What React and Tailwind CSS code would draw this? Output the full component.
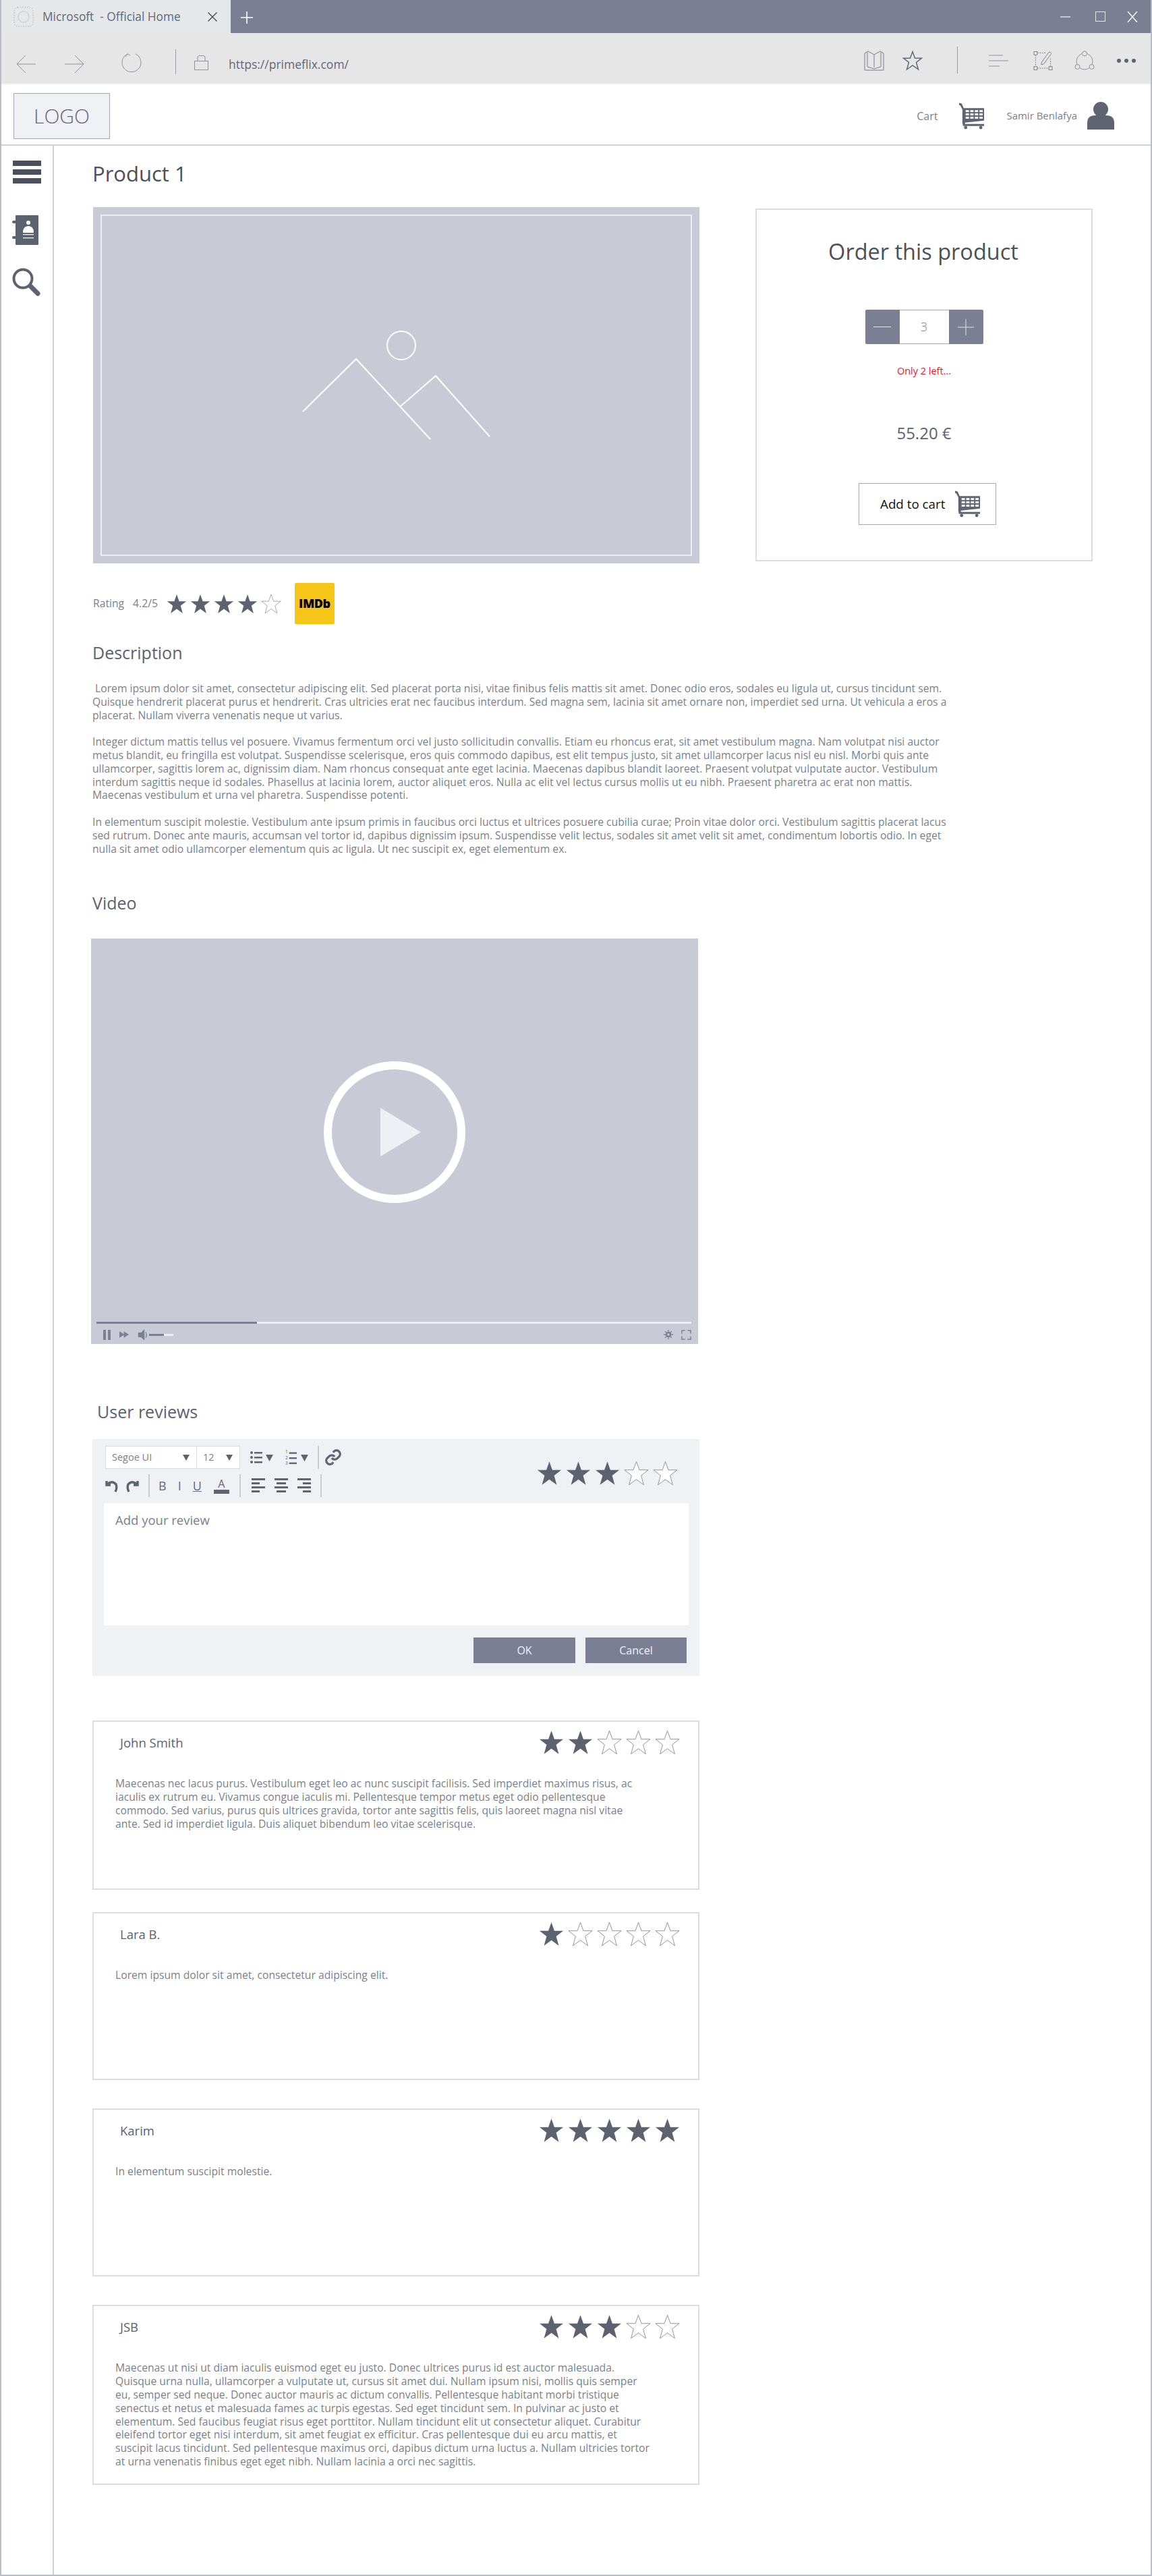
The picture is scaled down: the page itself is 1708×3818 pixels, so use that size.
import React from 'react';

const Star = ({ filled, size = 37 }) => (
  <svg width={size} height={size} viewBox="0 0 24 24" className="shrink-0">
    <polygon
      points="12,0.8 14.9,8.9 23.4,8.9 16.6,14.2 19.1,23.2 12,18 4.9,23.2 7.4,14.2 0.6,8.9 9.1,8.9"
      fill={filled ? '#5c6270' : '#ffffff'}
      stroke={filled ? '#5c6270' : '#8a8d98'}
      strokeWidth={filled ? 0 : 0.6}
    />
  </svg>
);

const Stars = ({ count, size = 37, className = 'gap-[6px]' }) => (
  <div className={`flex ${className}`}>
    {[1, 2, 3, 4, 5].map((n) => (
      <Star key={n} filled={n <= count} size={size} />
    ))}
  </div>
);

const CartIcon = ({ className }) => (
  <svg viewBox="0 0 40 40" className={className} fill="#5f6472">
    <path d="M1 0 L5 1 L8 8 L39 8 L39 27 L10 30 L10 32 L39 32 L39 35 L7 35 L6 30 L6 10 L3 4 L1 3 Z" />
    <circle cx="11" cy="37.5" r="2.5" />
    <circle cx="34" cy="37.5" r="2.5" />
    <g fill="#ffffff">
      <rect x="11" y="11" width="5" height="3" />
      <rect x="18" y="11" width="5" height="3" />
      <rect x="25" y="11" width="5" height="3" />
      <rect x="32" y="11" width="5" height="3" />
      <rect x="11" y="16" width="5" height="3" />
      <rect x="18" y="16" width="5" height="3" />
      <rect x="25" y="16" width="5" height="3" />
      <rect x="32" y="16" width="5" height="3" />
      <rect x="11" y="21" width="5" height="3" />
      <rect x="18" y="21" width="5" height="3" />
      <rect x="25" y="21" width="5" height="3" />
      <rect x="32" y="21" width="5" height="3" />
    </g>
  </svg>
);

const Caret = ({ className }) => (
  <svg viewBox="0 0 10 10" className={className} fill="#5f6472">
    <polygon points="0,1 10,1 5,10" />
  </svg>
);

const Sep = ({ className }) => <div className={`w-[2px] bg-[#c9ccd4] ${className}`} />;

const AlignIcon = ({ kind }) => {
  const short = kind === 'left' ? [0, 12] : kind === 'center' ? [3, 14] : [8, 12];
  return (
    <svg viewBox="0 0 20 24" className="w-[20px] h-[24px]" fill="#5f6472">
      <rect x="0" y="1" width="20" height="3" />
      <rect x={short[0]} y="7" width={short[1]} height="3" />
      <rect x="0" y="13" width="20" height="3" />
      <rect x={short[0]} y="19" width={short[1]} height="3" />
    </svg>
  );
};

const reviews = [
  {
    name: 'John Smith',
    stars: 2,
    height: 'h-[251px]',
    mt: 'mt-[66px]',
    lines: [
      'Maecenas nec lacus purus. Vestibulum eget leo ac nunc suscipit facilisis. Sed imperdiet maximus risus, ac',
      'iaculis ex rutrum eu. Vivamus congue iaculis mi. Pellentesque tempor metus eget odio pellentesque',
      'commodo. Sed varius, purus quis ultrices gravida, tortor ante sagittis felis, quis laoreet magna nisl vitae',
      'ante. Sed id imperdiet ligula. Duis aliquet bibendum leo vitae scelerisque.',
    ],
  },
  {
    name: 'Lara B.',
    stars: 1,
    height: 'h-[249px]',
    mt: 'mt-[33px]',
    lines: ['Lorem ipsum dolor sit amet, consectetur adipiscing elit.'],
  },
  {
    name: 'Karim',
    stars: 5,
    height: 'h-[249px]',
    mt: 'mt-[42px]',
    lines: ['In elementum suscipit molestie.'],
  },
  {
    name: 'JSB',
    stars: 3,
    height: 'h-[267px]',
    mt: 'mt-[42px]',
    lines: [
      'Maecenas ut nisi ut diam iaculis euismod eget eu justo. Donec ultrices purus id est auctor malesuada.',
      'Quisque urna nulla, ullamcorper a vulputate ut, cursus sit amet dui. Nullam ipsum nisi, mollis quis semper',
      'eu, semper sed neque. Donec auctor mauris ac dictum convallis. Pellentesque habitant morbi tristique',
      'senectus et netus et malesuada fames ac turpis egestas. Sed eget tincidunt sem. In pulvinar ac justo et',
      'elementum. Sed faucibus feugiat risus eget porttitor. Nullam tincidunt elit ut consectetur aliquet. Curabitur',
      'eleifend tortor eget nisi interdum, sit amet feugiat ex efficitur. Cras pellentesque dui eu arcu mattis, et',
      'suscipit lacus tincidunt. Sed pellentesque maximus orci, dapibus dictum urna luctus a. Nullam ultricies tortor',
      'at urna venenatis finibus eget eget nibh. Nullam lacinia a orci nec sagittis.',
    ],
  },
];

const description = [
  [
    '\u00a0Lorem ipsum dolor sit amet, consectetur adipiscing elit. Sed placerat porta nisi, vitae finibus felis mattis sit amet. Donec odio eros, sodales eu ligula ut, cursus tincidunt sem.',
    'Quisque hendrerit placerat purus et hendrerit. Cras ultricies erat nec faucibus interdum. Sed magna sem, lacinia sit amet ornare non, imperdiet sed urna. Ut vehicula a eros a',
    'placerat. Nullam viverra venenatis neque ut varius.',
  ],
  [
    'Integer dictum mattis tellus vel posuere. Vivamus fermentum orci vel justo sollicitudin convallis. Etiam eu rhoncus erat, sit amet vestibulum magna. Nam volutpat nisi auctor',
    'metus blandit, eu fringilla est volutpat. Suspendisse scelerisque, eros quis commodo dapibus, est elit tempus justo, sit amet ullamcorper lacus nisl eu nisl. Morbi quis ante',
    'ullamcorper, sagittis lorem ac, dignissim diam. Nam rhoncus consequat ante eget lacinia. Maecenas dapibus blandit laoreet. Praesent volutpat vulputate auctor. Vestibulum',
    'interdum sagittis neque id sodales. Phasellus at lacinia lorem, auctor aliquet eros. Nulla ac elit vel lectus cursus mollis ut eu nibh. Praesent pharetra ac erat non mattis.',
    'Maecenas vestibulum et urna vel pharetra. Suspendisse potenti.',
  ],
  [
    'In elementum suscipit molestie. Vestibulum ante ipsum primis in faucibus orci luctus et ultrices posuere cubilia curae; Proin vitae dolor orci. Vestibulum sagittis placerat lacus',
    'sed rutrum. Donec ante mauris, accumsan vel tortor id, dapibus dignissim ipsum. Suspendisse velit lectus, sodales sit amet velit sit amet, condimentum lobortis odio. In eget',
    'nulla sit amet odio ullamcorper elementum quis ac ligula. Ut nec suscipit ex, eget elementum ex.',
  ],
];

const BrowserChrome = () => (
  <>
    <div className="flex h-[49px] bg-[#7b7f93]">
      <div className="flex items-center w-[340px] h-full bg-[#e6e7e8] pl-[18px]">
        <svg viewBox="0 0 30 30" className="w-[30px] h-[30px] shrink-0" fill="none" stroke="#a9abb2">
          <rect x="1" y="1" width="28" height="28" rx="5" strokeDasharray="1.5 2" />
          <circle cx="15" cy="15" r="8" stroke="#d0d1d5" strokeWidth="1.5" />
        </svg>
        <span className="ml-[13px] text-[17.3px] text-[#63677a] whitespace-nowrap">Microsoft&nbsp; - Official Home</span>
        <svg viewBox="0 0 14 14" className="w-[14px] h-[14px] ml-auto mr-[20px]" stroke="#3f434f" strokeWidth="1.3">
          <path d="M0.5 0.5 L13.5 13.5 M13.5 0.5 L0.5 13.5" />
        </svg>
      </div>
      <svg viewBox="0 0 18 18" className="w-[18px] h-[18px] mt-[17px] ml-[15px]" stroke="#ffffff" strokeWidth="1.6">
        <path d="M9 0 V18 M0 9 H18" />
      </svg>
      <div className="flex items-start ml-auto pt-[17px] pr-[19px]">
        <div className="w-[15px] h-[2px] bg-[#c5c8d2] mt-[7px]" />
        <div className="w-[15px] h-[15px] border border-[#e4e5ea] ml-[37px]" />
        <svg viewBox="0 0 16 16" className="w-[16px] h-[16px] ml-[32px]" stroke="#ffffff" strokeWidth="1.4">
          <path d="M1 0 L15 16 M15 0 L1 16" />
        </svg>
      </div>
    </div>
    <div className="flex items-center h-[76px] pt-[8px] bg-[#e6e6e7] border-b-2 border-[#eceded]">
      <svg viewBox="0 0 30 26" className="w-[30px] h-[26px] ml-[22px] mt-[10px]" fill="none" stroke="#8f929c" strokeWidth="1">
        <path d="M29 13 H1 M14 0 L1 13 L14 26" />
      </svg>
      <svg viewBox="0 0 30 26" className="w-[30px] h-[26px] ml-[41px] mt-[10px]" fill="none" stroke="#8f929c" strokeWidth="1">
        <path d="M1 13 H29 M16 0 L29 13 L16 26" />
      </svg>
      <svg viewBox="0 0 30 32" className="w-[30px] h-[32px] ml-[55px] mt-[6px]" fill="none" stroke="#8f929c" strokeWidth="1">
        <path d="M9 3 A14 14 0 1 0 21 3 M9 3 L6 7 M9 3 L13 5" />
      </svg>
      <div className="w-[1px] h-[37px] bg-[#9a9da6] ml-[50px] mt-[3px]" />
      <svg viewBox="0 0 21 22" className="w-[21px] h-[22px] ml-[27px] mt-[6px]" fill="none" stroke="#8f929c" strokeWidth="1">
        <rect x="0.5" y="8.5" width="20" height="13" />
        <path d="M5 8 V3 Q5 0.5 8 0.5 H13 Q16 0.5 16 3 V8" />
      </svg>
      <span className="ml-[30px] mt-[10px] text-[17.5px] text-[#63677a] whitespace-nowrap">https://primeflix.com/</span>
      <svg viewBox="0 0 30 30" className="w-[30px] h-[30px] ml-auto" fill="none" stroke="#7b7f8a" strokeWidth="1">
        <path d="M1 4 V29 H29 V4 L24 1 L15 6 L6 1 Z M15 6 V25 M5 3 V24 L15 27 L25 24 V3" />
      </svg>
      <svg viewBox="0 0 30 30" className="w-[30px] h-[30px] ml-[27px]" fill="none" stroke="#63677a" strokeWidth="1.5">
        <polygon points="15,1.5 18.5,11.2 28.5,11.2 20.5,17.5 23.5,28 15,22 6.5,28 9.5,17.5 1.5,11.2 11.5,11.2" />
      </svg>
      <div className="w-[1px] h-[40px] bg-[#9a9da6] ml-[51px] -mt-[3px]" />
      <svg viewBox="0 0 30 18" className="w-[30px] h-[18px] ml-[45px]" stroke="#8f929c" strokeWidth="1">
        <path d="M1 1 H22 M1 9 H30 M1 17 H17" />
      </svg>
      <svg viewBox="0 0 30 30" className="w-[29px] h-[30px] ml-[37px]" fill="none" stroke="#7b7f8a" strokeWidth="1">
        <rect x="1" y="1" width="5" height="5" />
        <rect x="1" y="24" width="5" height="5" />
        <rect x="24" y="24" width="5" height="5" />
        <path d="M6 3 H20 M3.5 6 V24 M6 26.5 H24 M26.5 24 V10" strokeDasharray="2 1.5" />
        <path d="M12 21 L13 17 L24 2 Q26 1 27 3 Q28 4 27 5 L16 20 Z" />
      </svg>
      <svg viewBox="0 0 30 30" className="w-[30px] h-[30px] ml-[32px]" fill="none" stroke="#8f929c" strokeWidth="1">
        <circle cx="15" cy="16" r="12" />
        <circle cx="15" cy="4.5" r="3.5" fill="#e6e6e7" />
        <circle cx="4.5" cy="24" r="3.5" fill="#e6e6e7" />
        <circle cx="25.5" cy="24" r="3.5" fill="#e6e6e7" />
      </svg>
      <div className="flex gap-[5px] ml-[33px] mr-[22px]">
        <div className="w-[6px] h-[6px] rounded-full bg-[#5f6472]" />
        <div className="w-[6px] h-[6px] rounded-full bg-[#5f6472]" />
        <div className="w-[6px] h-[6px] rounded-full bg-[#5f6472]" />
      </div>
    </div>
  </>
);

const SiteHeader = () => (
  <div className="flex items-center h-[91px] border-b-2 border-[#cfd1d9] pl-[18px] pt-[4px]">
    <div className="flex items-center justify-center w-[143px] h-[68px] bg-[#f0f1f5] border border-[#a6a9b3] text-[30px] font-light text-[#63677a]">
      LOGO
    </div>
    <span className="ml-auto text-[16px] text-[#7b7f8a]">Cart</span>
    <CartIcon className="w-[39px] h-[40px] ml-[31px]" />
    <span className="ml-[32px] text-[15px] text-[#7b7f8a] whitespace-nowrap">Samir Benlafya</span>
    <svg viewBox="0 0 40 41" className="w-[40px] h-[41px] ml-[15px] mr-[54px]" fill="#5f6472">
      <ellipse cx="20" cy="11" rx="11" ry="11" />
      <path d="M0 41 V31 Q0 20 12 20 H28 Q40 20 40 31 V41 Z" />
    </svg>
  </div>
);

const Sidebar = () => (
  <div className="w-[78px] shrink-0 border-r-2 border-[#cfd1d9]">
    <div className="flex flex-col gap-[5px] ml-[17px] mt-[22px] w-[42px]">
      <div className="h-[8px] bg-[#4b505d]" />
      <div className="h-[8px] bg-[#4b505d]" />
      <div className="h-[8px] bg-[#4b505d]" />
    </div>
    <svg viewBox="0 0 40 44" className="w-[40px] h-[44px] ml-[16px] mt-[47px]" fill="#5c6270">
      <rect x="5" y="0" width="34" height="44" rx="1" />
      <rect x="0" y="8" width="12" height="4" rx="2" />
      <rect x="0" y="31" width="12" height="4" rx="2" />
      <circle cx="24" cy="11" r="3" fill="#ffffff" />
      <path d="M16 26 Q16 16 24 16 Q32 16 32 26 Z" fill="#ffffff" />
      <rect x="16" y="28" width="16" height="1.2" fill="#ffffff" />
      <rect x="16" y="33" width="16" height="1.2" fill="#ffffff" />
    </svg>
    <svg viewBox="0 0 42 42" className="w-[42px] h-[42px] ml-[16px] mt-[34px]" fill="none" stroke="#5c6270">
      <circle cx="16" cy="16" r="13.5" strokeWidth="4" />
      <path d="M27 27 L38 38" strokeWidth="7" strokeLinecap="round" />
    </svg>
  </div>
);

const OrderCard = () => (
  <div className="flex flex-col items-center w-[500px] h-[523px] mt-[2px] ml-[83px] border-2 border-[#dcdde1]">
    <h2 className="-ml-[2px] mt-[42px] h-[40px] leading-[40px] text-[32.5px] font-medium text-[#4b505d] whitespace-nowrap">Order this product</h2>
    <div className="flex mt-[66px] h-[51px] w-[175px]">
      <div className="flex items-center justify-center w-[51px] bg-[#7b7f93] rounded-l-[2px]">
        <div className="w-[26px] h-[1px] bg-[#e4e5ea]" />
      </div>
      <div className="flex items-center justify-center w-[73px] border-y border-[#a6a9b3] text-[18px] font-light text-[#7b7f8a]">3</div>
      <div className="flex items-center justify-center w-[51px] bg-[#7b7f93] rounded-r-[2px]">
        <svg viewBox="0 0 24 24" className="w-[24px] h-[24px]" stroke="#e4e5ea" strokeWidth="1">
          <path d="M12 0 V24 M0 12 H24" />
        </svg>
      </div>
    </div>
    <div className="mt-[30px] h-[20px] leading-[20px] text-[14.5px] text-[#e01b2d] whitespace-nowrap">Only 2 left...</div>
    <div className="mt-[66px] h-[32px] leading-[32px] text-[24px] font-medium text-[#5c6270] whitespace-nowrap">55.20 €</div>
    <div className="flex items-center w-[204px] h-[62px] ml-[10px] mt-[58px] pl-[31px] border border-[#a6a9b3]">
      <span className="text-[18.8px] text-[#111111] whitespace-nowrap">Add to cart</span>
      <CartIcon className="w-[39px] h-[42px] ml-[14px]" />
    </div>
  </div>
);

const Editor = () => (
  <div className="mt-[25px] w-[900px] h-[351px] pt-[10px] bg-[#eff1f5]">
    <div className="flex justify-between pl-[19px] pr-[32px] h-[76px]">
      <div className="flex flex-col gap-[8px]">
        <div className="flex items-center h-[34px]">
          <div className="flex items-center w-[200px] h-[34px] bg-white border border-[#d7d9e0] text-[14.5px] text-[#7b7f8a]">
            <span className="ml-[9px] w-[105px]">Segoe UI</span>
            <Caret className="w-[10px] h-[10px]" />
            <div className="w-[1px] h-full bg-[#d7d9e0] ml-[10px]" />
            <span className="ml-[9px] w-[34px]">12</span>
            <Caret className="w-[10px] h-[10px]" />
          </div>
          <svg viewBox="0 0 18 18" className="w-[18px] h-[18px] ml-[15px]" fill="#5f6472">
            <circle cx="2" cy="2" r="2" />
            <circle cx="2" cy="9" r="2" />
            <circle cx="2" cy="16" r="2" />
            <rect x="6" y="1" width="12" height="2.5" />
            <rect x="6" y="8" width="12" height="2.5" />
            <rect x="6" y="15" width="12" height="2.5" />
          </svg>
          <Caret className="w-[11px] h-[11px] ml-[5px]" />
          <svg viewBox="0 0 18 24" className="w-[17px] h-[24px] ml-[18px]" fill="#5f6472">
            <text x="0" y="6" fontSize="7">1</text>
            <text x="0" y="15" fontSize="7">2</text>
            <text x="0" y="24" fontSize="7">3</text>
            <rect x="6" y="4" width="12" height="2.5" />
            <rect x="6" y="12" width="12" height="2.5" />
            <rect x="6" y="20" width="12" height="2.5" />
          </svg>
          <Caret className="w-[11px] h-[11px] ml-[6px]" />
          <Sep className="h-[34px] ml-[14px]" />
          <svg viewBox="0 0 24 24" className="w-[26px] h-[26px] ml-[8px]" fill="none" stroke="#5f6472" strokeWidth="3">
            <path d="M10 13 a5 5 0 0 0 7.5 .5 l3 -3 a5 5 0 0 0 -7 -7 l-1.7 1.7" />
            <path d="M14 11 a5 5 0 0 0 -7.5 -.5 l-3 3 a5 5 0 0 0 7 7 l1.7 -1.7" />
          </svg>
        </div>
        <div className="flex items-center h-[34px]">
          <svg viewBox="0 0 20 20" className="w-[20px] h-[20px]" fill="none" stroke="#5f6472" strokeWidth="3.5">
            <path d="M2 3 L2 9 L8 9 M2 9 Q10 1 16 8 Q18 13 15 19" />
          </svg>
          <svg viewBox="0 0 20 20" className="w-[20px] h-[20px] ml-[10px]" fill="none" stroke="#5f6472" strokeWidth="3.5">
            <path d="M18 3 L18 9 L12 9 M18 9 Q10 1 4 8 Q2 13 5 19" />
          </svg>
          <Sep className="h-[34px] ml-[14px]" />
          <span className="ml-[13px] text-[18px] text-[#63677a]">B</span>
          <span className="ml-[17px] text-[18px] text-[#63677a]">I</span>
          <span className="ml-[17px] text-[18px] text-[#63677a] underline">U</span>
          <div className="flex flex-col items-center ml-[18px] w-[23px]">
            <span className="text-[16px] leading-[17px] text-[#63677a]">A</span>
            <div className="w-[23px] h-[6px] bg-[#5f6472]" />
          </div>
          <Sep className="h-[34px] ml-[15px]" />
          <div className="flex gap-[14px] ml-[16px]">
            <AlignIcon kind="left" />
            <AlignIcon kind="center" />
            <AlignIcon kind="right" />
          </div>
          <Sep className="h-[34px] ml-[14px]" />
        </div>
      </div>
      <div className="mt-[22px]">
        <Stars count={3} />
      </div>
    </div>
    <div className="ml-[17px] mt-[9px] w-[867px] h-[181px] bg-white pl-[17px] pt-[13px]">
      <span className="block text-[18.5px] leading-[24px] text-[#7b7f8a]">Add your review</span>
    </div>
    <div className="flex justify-end gap-[15px] pr-[19px] mt-[18px]">
      <div className="flex items-center justify-center w-[151px] h-[38px] bg-[#7b7f93] text-[16px] text-[#f0f1f5]">OK</div>
      <div className="flex items-center justify-center w-[150px] h-[38px] bg-[#7b7f93] text-[16px] text-[#f0f1f5]">Cancel</div>
    </div>
  </div>
);

const VideoPlayer = () => (
  <div className="relative -ml-[2px] mt-[37px] w-[900px] h-[601px] bg-[#c8cbd5]">
    <svg viewBox="0 0 210 210" className="absolute left-[345px] top-[182px] w-[210px] h-[210px]">
      <circle cx="105" cy="105" r="99" fill="none" stroke="#ffffff" strokeWidth="12" />
      <polygon points="84,69 144,105 84,141" fill="#eff0f5" />
    </svg>
    <div className="absolute left-[8px] right-[10px] top-[568px] h-[3px] bg-[#eceef3]">
      <div className="w-[238px] h-full bg-[#7b7f93]" />
    </div>
    <div className="absolute left-[18px] right-[10px] bottom-[6px] flex items-center h-[16px]">
      <div className="flex gap-[3px]">
        <div className="w-[4px] h-[15px] bg-[#7b7f93]" />
        <div className="w-[4px] h-[15px] bg-[#7b7f93]" />
      </div>
      <svg viewBox="0 0 16 10" className="w-[15px] h-[10px] ml-[13px]" fill="#7b7f93">
        <polygon points="0,0 8,5 0,10" />
        <polygon points="7,0 15,5 7,10" />
      </svg>
      <svg viewBox="0 0 18 20" className="w-[17px] h-[17px] ml-[12px]" fill="#7b7f93">
        <polygon points="0,6 5,6 11,0 11,20 5,14 0,14" />
        <path d="M13 5 Q16 10 13 15" fill="none" stroke="#7b7f93" strokeWidth="1.5" />
      </svg>
      <div className="w-[22px] h-[3px] bg-[#7b7f93]" />
      <div className="w-[14px] h-[3px] bg-[#eceef3]" />
      <svg viewBox="0 0 16 16" className="w-[14px] h-[14px] ml-auto" fill="#7b7f93" stroke="#7b7f93">
        <circle cx="8" cy="8" r="3.5" fill="none" strokeWidth="3" />
        <path d="M8 0 V3 M8 13 V16 M0 8 H3 M13 8 H16 M2.5 2.5 L4.5 4.5 M11.5 11.5 L13.5 13.5 M2.5 13.5 L4.5 11.5 M11.5 4.5 L13.5 2.5" strokeWidth="1.5" />
      </svg>
      <svg viewBox="0 0 16 16" className="w-[15px] h-[15px] ml-[12px]" fill="none" stroke="#7b7f93" strokeWidth="1.5">
        <path d="M1 6 V1 H6 M10 1 H15 V6 M15 10 V15 H10 M6 15 H1 V10" />
      </svg>
    </div>
  </div>
);

const ReviewCard = ({ review }) => (
  <div className={`w-[900px] border-2 border-[#dcdde1] ${review.height} ${review.mt}`}>
    <div className="flex justify-between items-start h-[67px] pl-[39px] pr-[27px] pt-[12px]">
      <span className="mt-[7px] h-[24px] leading-[24px] text-[18.5px] font-medium text-[#5c6270]">{review.name}</span>
      <Stars count={review.stars} />
    </div>
    <div className="ml-[32px] mt-[15px] text-[15.7px] leading-[19.8px] text-[#7b7f8a] whitespace-nowrap">
      {review.lines.map((line) => (
        <div key={line}>{line}</div>
      ))}
    </div>
  </div>
);

export default function App() {
  return (
    <div className="w-[1708px] h-[3818px] bg-white border-x-2 border-b-2 border-[#b9bccb] font-['Open_Sans',sans-serif] overflow-hidden">
      <BrowserChrome />
      <SiteHeader />
      <div className="flex h-[3600px]">
        <Sidebar />
        <main className="pl-[57px] pt-[21px]">
          <h1 className="h-[40px] leading-[40px] text-[31px] font-medium text-[#4b505d]">Product 1</h1>
          <div className="flex items-start mt-[30px]">
            <div className="flex w-[899px] h-[528px] ml-[1px] p-[11px] bg-[#c8cbd5]">
              <div className="relative flex-1 border-2 border-[#eceef3]">
                <svg viewBox="0 0 330 200" className="absolute left-[269px] top-[150px] w-[330px] h-[200px]" fill="none" stroke="#ffffff" strokeWidth="2">
                  <circle cx="175" cy="42" r="21" />
                  <path d="M29 140 L108 62 L218 181" />
                  <path d="M174 132 L226 87 L306 177" />
                </svg>
              </div>
            </div>
            <OrderCard />
          </div>
          <div className="flex items-center mt-[29px] h-[61px] ml-[1px]">
            <span className="text-[15.7px] text-[#7b7f8a]">Rating</span>
            <span className="ml-[13px] text-[15.7px] text-[#7b7f8a]">4.2/5</span>
            <Stars count={4} size={30} className="gap-[5px] ml-[13px]" />
            <div className="flex items-center justify-center w-[59px] h-[61px] ml-[20px] bg-[#f5c518] rounded-[2px] text-[18px] font-extrabold tracking-tight text-black">
              IMDb
            </div>
          </div>
          <h2 className="mt-[27px] h-[30px] leading-[30px] text-[25px] font-medium text-[#5c6270]">Description</h2>
          <div className="mt-[29px] text-[15.7px] leading-[19.8px] text-[#7b7f8a] whitespace-nowrap">
            {description.map((para, i) => (
              <p key={i} className={i > 0 ? 'mt-[19.8px]' : ''}>
                {para.map((line) => (
                  <span key={line} className="block">{line}</span>
                ))}
              </p>
            ))}
          </div>
          <h2 className="mt-[55px] h-[30px] leading-[30px] text-[25px] font-medium text-[#5c6270]">Video</h2>
          <div className="pt-[1px]">
            <VideoPlayer />
          </div>
          <h2 className="ml-[7px] mt-[85px] h-[30px] leading-[30px] text-[25px] font-medium text-[#5c6270]">User reviews</h2>
          <div className="pt-[1px]">
            <Editor />
          </div>
          {reviews.map((review) => (
            <ReviewCard key={review.name} review={review} />
          ))}
        </main>
      </div>
    </div>
  );
}
